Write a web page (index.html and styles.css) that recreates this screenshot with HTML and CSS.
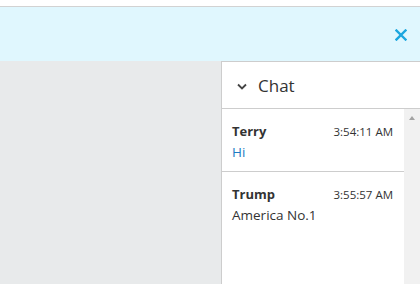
FILE: index.html
```
<!DOCTYPE html>
<html>
<head>
<meta charset="utf-8">
<link rel="stylesheet" href="styles.css">
</head>
<body>
<div class="topbar"></div>
<div class="banner">
  <svg class="close" width="12" height="12" viewBox="0 0 12 12"><path d="M1.5 1.5 L10.5 10.5 M10.5 1.5 L1.5 10.5" stroke="#1ba6df" stroke-width="2.4" stroke-linecap="square" fill="none"/></svg>
</div>
<div class="main">
  <div class="stage"></div>
  <div class="chat">
    <div class="chat-head">
      <svg class="chev" width="10" height="7" viewBox="0 0 10 7"><path d="M1 1.5 L5 5.5 L9 1.5" stroke="#444" stroke-width="1.8" fill="none"/></svg>
      <span class="chat-title">Chat</span>
    </div>
    <div class="chat-body">
      <div class="msgs">
        <div class="msg">
          <div class="msg-top"><span class="name">Terry</span><span class="time">3:54:11 AM</span></div>
          <div class="text own">Hi</div>
        </div>
        <div class="msg">
          <div class="msg-top"><span class="name">Trump</span><span class="time">3:55:57 AM</span></div>
          <div class="text">America No.1</div>
        </div>
      </div>
      <div class="scrollbar"><span class="arrow"></span></div>
    </div>
  </div>
</div>
</body>
</html>
```
FILE: styles.css
```
html, body {
  margin: 0;
  padding: 0;
  height: 100%;
  font-family: "Open Sans", "Noto Sans", sans-serif;
  color: #333;
  background: #fff;
  overflow: hidden;
}
.topbar {
  height: 6px;
  background: #fff;
  border-bottom: 1px solid #d2d2d2;
}
.banner {
  height: 54px;
  background: #e0f7fe;
  display: flex;
  align-items: center;
  justify-content: flex-end;
  padding-right: 13px;
}
.close { display: block; margin-top: 1px; }
.main {
  display: flex;
  height: 223px;
}
.stage {
  flex: 1;
  background: #e8eaeb;
}
.chat {
  width: 198px;
  border-left: 1px solid #cdcdcd;
  border-top: 1px solid #cdcdcd;
  background: #fff;
  display: flex;
  flex-direction: column;
}
.chat-head {
  height: 46px;
  border-bottom: 1px solid #cdcdcd;
  display: flex;
  align-items: center;
  padding-left: 15px;
}
.chev { display: block; margin-right: 11px; margin-top: 2px; }
.chat-title {
  font-size: 17px;
  color: #333;
}
.chat-body {
  flex: 1;
  display: flex;
}
.msgs { flex: 1; }
.msg {
  padding: 13px 11px 6px 10px;
  border-bottom: 1px solid #cdcdcd;
  height: 43px;
}
.msg:last-child { border-bottom: none; }
.msg-top {
  display: flex;
  justify-content: space-between;
  align-items: baseline;
  height: 20px;
}
.name {
  font-weight: 700;
  font-size: 13px;
}
.time {
  font-size: 11.5px;
}
.text {
  font-size: 13.5px;
  line-height: 20px;
}
.text.own { color: #1e7bc4; }
.scrollbar {
  width: 16px;
  background: #f1f1f1;
  position: relative;
}
.arrow {
  position: absolute;
  left: 5px;
  top: 7px;
  width: 0;
  height: 0;
  border-left: 3px solid transparent;
  border-right: 3px solid transparent;
  border-bottom: 4px solid #a3a3a3;
}
```
